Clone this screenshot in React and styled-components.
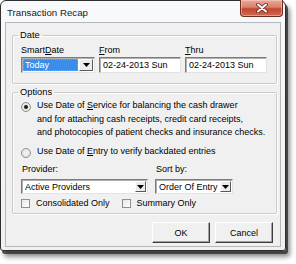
import React from 'react'
import styled, { createGlobalStyle } from 'styled-components'

const GlobalStyle = createGlobalStyle`
  html, body {
    margin: 0;
    padding: 0;
    background: #fff;
  }
  body {
    font-family: 'Liberation Sans', Arial, sans-serif;
    font-size: 9px;
    color: #000;
  }
`

const Page = styled.div`
  width: 296px;
  height: 264px;
  overflow: hidden;
`

const Window = styled.div`
  width: 284px;
  border: 1px solid #2e2e2e;
  border-radius: 6px 6px 3px 3px;
  background: linear-gradient(#f8f9fa, #eef0f2);
  box-shadow: 2px 3px 0 rgba(40, 40, 40, 0.75), 4px 6px 5px rgba(0, 0, 0, 0.45);
`

const TitleBar = styled.div`
  height: 21px;
  display: flex;
  align-items: flex-start;
  padding-left: 6px;
`

const Title = styled.div`
  margin-top: 6px;
  font-size: 9.7px;
  line-height: 12px;
  color: #1a1a1a;
`

const CloseButton = styled.div`
  margin-left: auto;
  margin-right: 2px;
  margin-top: -1px;
  width: 43px;
  height: 17px;
  box-sizing: border-box;
  border: 1px solid #6e2b20;
  border-top: none;
  border-radius: 0 0 4px 4px;
  background: linear-gradient(#e9ab9b 0%, #d9816c 45%, #c3452f 55%, #cf6a50 100%);
  box-shadow: inset 0 0 0 1px rgba(255, 220, 210, 0.45);
  display: flex;
  align-items: center;
  justify-content: center;
`

const Client = styled.div`
  margin: 0 4px 3px 4px;
  border: 1px solid #b4b7bb;
  background: #f0f0f0;
  padding: 7px 3px 3px 6px;
`

const Group = styled.fieldset`
  margin: ${p => p.$mt || 0}px 0 0 0;
  padding: ${p => p.$pad};
  border: 1px solid #cbcbcb;
  border-radius: 2px;
  box-shadow: inset 1px 1px 0 #fff, 1px 1px 0 #fff;
  min-width: 0;
`

const Legend = styled.legend`
  margin-left: -3px;
  padding: 0 2px;
  line-height: 11px;
  font-size: 9.3px;
`

const DateGrid = styled.div`
  display: grid;
  grid-template-columns: 74px 82px 82px;
  column-gap: 4px;
  row-gap: 1px;
`

const Label = styled.div`
  line-height: 11px;
  padding-left: ${p => p.$indent || 0}px;
  white-space: nowrap;
`

const Field = styled.div`
  height: ${p => p.$h || 16}px;
  box-sizing: border-box;
  border: 1px solid;
  border-color: #7c7c7c #e3e3e3 #e3e3e3 #7c7c7c;
  box-shadow: inset 1px 1px 0 #b0b0b0;
  background: #fff;
  display: flex;
  align-items: stretch;
  padding: 1px;
`

const FieldText = styled.div`
  flex: 1;
  display: flex;
  align-items: center;
  padding-left: 2px;
  white-space: nowrap;
  ${p => p.$selected && `
    background: #3a8ee8;
    color: #fff;
    outline: 1px dotted #c79a5a;
    outline-offset: -1px;
  `}
`

const DropButton = styled.div`
  width: ${p => p.$w || 12}px;
  box-sizing: border-box;
  margin-left: 1px;
  border: 1px solid;
  border-color: #fdfdfd #5a5a5a #5a5a5a #fdfdfd;
  background: #ececec;
  display: flex;
  align-items: center;
  justify-content: center;
`

const OptionRow = styled.div`
  display: flex;
  align-items: flex-start;
  margin-top: ${p => p.$mt || 0}px;
  line-height: 13.5px;
`

const Radio = styled.span`
  flex: none;
  width: 8px;
  height: 8px;
  margin: 3px 6px 0 0;
  border: 1px solid #8e8f8f;
  border-radius: 50%;
  background: radial-gradient(circle, #f4f4f4 0%, #dcdcdc 100%);
  display: flex;
  align-items: center;
  justify-content: center;
  &::after {
    content: '';
    width: 4px;
    height: 4px;
    border-radius: 50%;
    background: ${p => (p.$checked ? '#1b1b1b' : 'transparent')};
  }
`

const SelectGrid = styled.div`
  display: grid;
  grid-template-columns: 127px 78px;
  column-gap: 7px;
  row-gap: 4px;
  margin-top: 6px;
`

const CheckRow = styled.div`
  display: flex;
  align-items: center;
  margin-top: 4px;
  line-height: 11px;
`

const CheckItem = styled.label`
  display: flex;
  align-items: center;
  gap: 6px;
  margin-right: 12px;
`

const Box = styled.span`
  width: 9px;
  height: 9px;
  box-sizing: border-box;
  border: 1px solid #8e8f8f;
  background: linear-gradient(135deg, #e6e6e6, #fff);
`

const ButtonRow = styled.div`
  display: flex;
  justify-content: flex-end;
  gap: 5px;
  margin-top: 8px;
  padding-right: 4px;
`

const Button = styled.div`
  width: 58px;
  height: 21px;
  box-sizing: border-box;
  border: 1px solid;
  border-color: #ffffff #3e3e3e #3e3e3e #ffffff;
  box-shadow: inset -1px -1px 0 #a0a0a0;
  background: #f0f0f0;
  display: flex;
  align-items: center;
  justify-content: center;
`

const Arrow = () => (
  <svg width="7" height="4" viewBox="0 0 7 4">
    <path d="M0 0h7L3.5 4z" fill="#000" />
  </svg>
)

const CloseX = () => (
  <svg width="12" height="10" viewBox="0 0 12 10">
    <path d="M2 1.5l8 7M10 1.5l-8 7" stroke="#5b2219" strokeWidth="3.6" strokeLinecap="round" />
    <path d="M2 1.5l8 7M10 1.5l-8 7" stroke="#fff" strokeWidth="2" strokeLinecap="round" />
  </svg>
)

export default function App() {
  return (
    <Page>
      <GlobalStyle />
      <Window>
        <TitleBar>
          <Title>Transaction Recap</Title>
          <CloseButton>
            <CloseX />
          </CloseButton>
        </TitleBar>
        <Client>
          <Group $pad="4px 7px 10px 8px">
            <Legend>Date</Legend>
            <DateGrid>
              <Label>Smart<u>D</u>ate</Label>
              <Label><u>F</u>rom</Label>
              <Label><u>T</u>hru</Label>
              <Field>
                <FieldText $selected>Today</FieldText>
                <DropButton $w={14}><Arrow /></DropButton>
              </Field>
              <Field>
                <FieldText>02-24-2013 Sun</FieldText>
              </Field>
              <Field>
                <FieldText>02-24-2013 Sun</FieldText>
              </Field>
            </DateGrid>
          </Group>
          <Group $mt={3} $pad="1px 7px 4px 8px">
            <Legend>Options</Legend>
            <OptionRow>
              <Radio $checked />
              <div>
                Use Date of <u>S</u>ervice for balancing the cash drawer<br />
                and for attaching cash receipts, credit card receipts,<br />
                and photocopies of patient checks and insurance checks.
              </div>
            </OptionRow>
            <OptionRow $mt={5}>
              <Radio />
              <div>Use Date of <u>E</u>ntry to verify backdated entries</div>
            </OptionRow>
            <SelectGrid>
              <Label $indent={1}>Provider:</Label>
              <Label $indent={1}>Sort by:</Label>
              <Field $h={15}>
                <FieldText>Active Providers</FieldText>
                <DropButton $w={11}><Arrow /></DropButton>
              </Field>
              <Field $h={15}>
                <FieldText>Order Of Entry</FieldText>
                <DropButton $w={11}><Arrow /></DropButton>
              </Field>
            </SelectGrid>
            <CheckRow>
              <CheckItem><Box />Consolidated Only</CheckItem>
              <CheckItem><Box />Summary Only</CheckItem>
            </CheckRow>
          </Group>
          <ButtonRow>
            <Button>OK</Button>
            <Button>Cancel</Button>
          </ButtonRow>
        </Client>
      </Window>
    </Page>
  )
}
